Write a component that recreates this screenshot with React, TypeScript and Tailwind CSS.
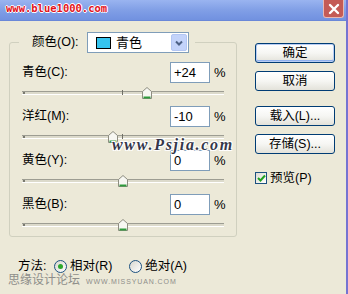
import React from "react";

const rows = [
  { label: "青色(C):", value: "+24", v: 24 },
  { label: "洋红(M):", value: "-10", v: -10 },
  { label: "黄色(Y):", value: "0", v: 0 },
  { label: "黑色(B):", value: "0", v: 0 },
];

const Thumb: React.FC = () => (
  <svg width="10" height="12" viewBox="0 0 10 12">
    <path d="M0.5 4.5 L5 0.5 L9.5 4.5 V11.5 H0.5 Z" fill="#f7f7f2" stroke="#8d8d80" />
    <path d="M1.5 10.5 H8.5" stroke="#2f9a3c" strokeWidth="2" />
  </svg>
);

const Slider: React.FC<{ v: number }> = ({ v }) => {
  // track is 201px wide, range -100..100
  const left = ((v + 100) / 200) * 200 - 4;
  return (
    <div className="relative h-[12px] mx-[12px] mt-[4px] flex items-center">
      <div className="w-full h-[4px] border-t border-[#9d9d92] border-b border-b-white bg-[#dcdacb]" />
      <div className="absolute left-[1px] top-[5px] w-[2px] h-[2px] bg-[#7a7a70]" />
      <div className="absolute left-[100px] top-[3px] w-[1px] h-[5px] bg-[#6f6f66]" />
      <div className="absolute top-0" style={{ left }}>
        <Thumb />
      </div>
    </div>
  );
};

const XpButton: React.FC<{ children: React.ReactNode; primary?: boolean }> = ({ children, primary }) => (
  <div
    className={`h-[20px] w-[80px] flex items-center justify-center rounded-[3px] border border-[#003c74] bg-linear-to-b from-white via-[#f6f6f3] to-[#e3e2da] text-[12.5px] leading-none ${
      primary ? "shadow-[inset_0_0_0_1px_#b9cdf3,inset_0_-1px_0_1px_#8fb0ee]" : ""
    }`}
  >
    {children}
  </div>
);

const Radio: React.FC<{ checked?: boolean }> = ({ checked }) => (
  <div className="w-[13px] h-[13px] rounded-full border border-[#1c5180] bg-linear-to-br from-[#d8d7cf] to-white flex items-center justify-center">
    {checked && <div className="w-[5px] h-[5px] rounded-full bg-[#2ca72c]" />}
  </div>
);

const App: React.FC = () => {
  return (
    <div className="w-[348px] h-[294px] relative overflow-hidden bg-[#ece9d8] flex flex-col border-r-2 border-[#7574d2] text-black font-['Liberation_Sans','Noto_Sans_CJK_SC',sans-serif] text-[12.5px]">
      {/* title bar */}
      <div className="h-[21px] shrink-0 flex justify-between bg-linear-to-b from-[#9ab4f0] via-[#819fe6] to-[#7191e0] border-b border-[#6a88d8]">
        <span className="pl-[6px] pt-[3px] text-[10.5px] leading-none font-bold text-[#e3121c] font-['DejaVu_Sans_Mono',monospace] [text-shadow:1px_0_#fff,-1px_0_#fff,0_1px_#fff,0_-1px_#fff]">
          www.blue1000.com
        </span>
        <div className="mr-[2px] w-[21px] h-[18px] rounded-b-[3px] bg-[#c45b56] border border-[#e9b8b2] border-t-0 flex items-center justify-center">
          <svg width="12" height="12" viewBox="0 0 12 12">
            <path d="M2 2 L10 10 M10 2 L2 10" stroke="#fff" strokeWidth="2.4" strokeLinecap="round" />
          </svg>
        </div>
      </div>

      <div className="flex flex-1">
        {/* left side */}
        <div className="pl-[9px] flex flex-col">
          <fieldset className="m-0 p-0 mt-[11px] w-[228px] h-[205px] border border-[#d0d0bf] rounded-[3px]">
            <legend className="ml-[9px] pl-[13px] pr-[6px] p-0 flex items-center">
              <span className="w-[55px]">颜色(O):</span>
              <div className="w-[102px] h-[21px] border border-[#7f9db9] bg-white flex items-center pl-[8px]">
                <div className="w-[15px] h-[12px] bg-[#35c4ef] border border-black" />
                <span className="ml-[5px] text-[13px]">青色</span>
                <div className="ml-auto mr-[1px] w-[16px] h-[17px] rounded-[2px] bg-[#c3d3fa] border border-[#b3c6f3] flex items-center justify-center">
                  <svg width="8" height="6" viewBox="0 0 8 6">
                    <path d="M1 1.5 L4 4.5 L7 1.5" stroke="#4d6185" strokeWidth="2" fill="none" />
                  </svg>
                </div>
              </div>
            </legend>

            <div className="flex flex-col mt-[9px]">
              {rows.map((r) => (
                <div key={r.label} className="h-[44px] flex flex-col">
                  <div className="h-[21px] flex items-center pl-[12px] pr-[12px]">
                    <span className="flex-1">{r.label}</span>
                    <div className="w-[40px] h-[21px] border border-[#7f9db9] bg-white flex items-center pl-[3px] text-[13px]">
                      {r.value}
                    </div>
                    <span className="ml-[4px] w-[10px] text-[13px]">%</span>
                  </div>
                  <Slider v={r.v} />
                </div>
              ))}
            </div>
          </fieldset>

          <div className="flex items-center ml-[9px] mt-[23px] h-[13px] gap-[4px]">
            <span className="w-[32px]">方法:</span>
            <Radio checked />
            <span className="ml-[-1px]">相对(R)</span>
            <span className="w-[9px]" />
            <Radio />
            <span className="ml-[-1px]">绝对(A)</span>
          </div>
        </div>

        {/* right buttons */}
        <div className="ml-[18px] mt-[22px] flex flex-col">
          <XpButton primary>确定</XpButton>
          <div className="mt-[8px]">
            <XpButton>取消</XpButton>
          </div>
          <div className="mt-[15px]">
            <XpButton>载入(L)...</XpButton>
          </div>
          <div className="mt-[8px]">
            <XpButton>存储(S)...</XpButton>
          </div>
          <div className="mt-[15px] flex items-center gap-[3px]">
            <div className="w-[12px] h-[12px] border border-[#1c5180] bg-linear-to-br from-[#dcdbd3] to-white flex items-center justify-center">
              <svg width="9" height="8" viewBox="0 0 9 8">
                <path d="M1 4 L3.5 6.5 L8 1.5" stroke="#21a121" strokeWidth="2" fill="none" />
              </svg>
            </div>
            <span>预览(P)</span>
          </div>
        </div>
      </div>

      {/* watermarks */}
      <div className="absolute left-[112px] top-[137px] text-[16px] leading-none font-bold italic tracking-[1.7px] text-[#35374a] font-['Liberation_Serif',serif] [text-shadow:1px_1px_#fff,-1px_-1px_#fff,1px_-1px_#fff,-1px_1px_#fff]">
        www.Psjia.com
      </div>
      <div className="absolute left-[8px] top-[274px] flex items-end gap-[6px] text-[#8e8e8a]">
        <span className="text-[12px] leading-none">思缘设计论坛</span>
        <span className="text-[7px] leading-none tracking-[0.9px] mb-[1px]">WWW.MISSYUAN.COM</span>
      </div>
    </div>
  );
};

export default App;
